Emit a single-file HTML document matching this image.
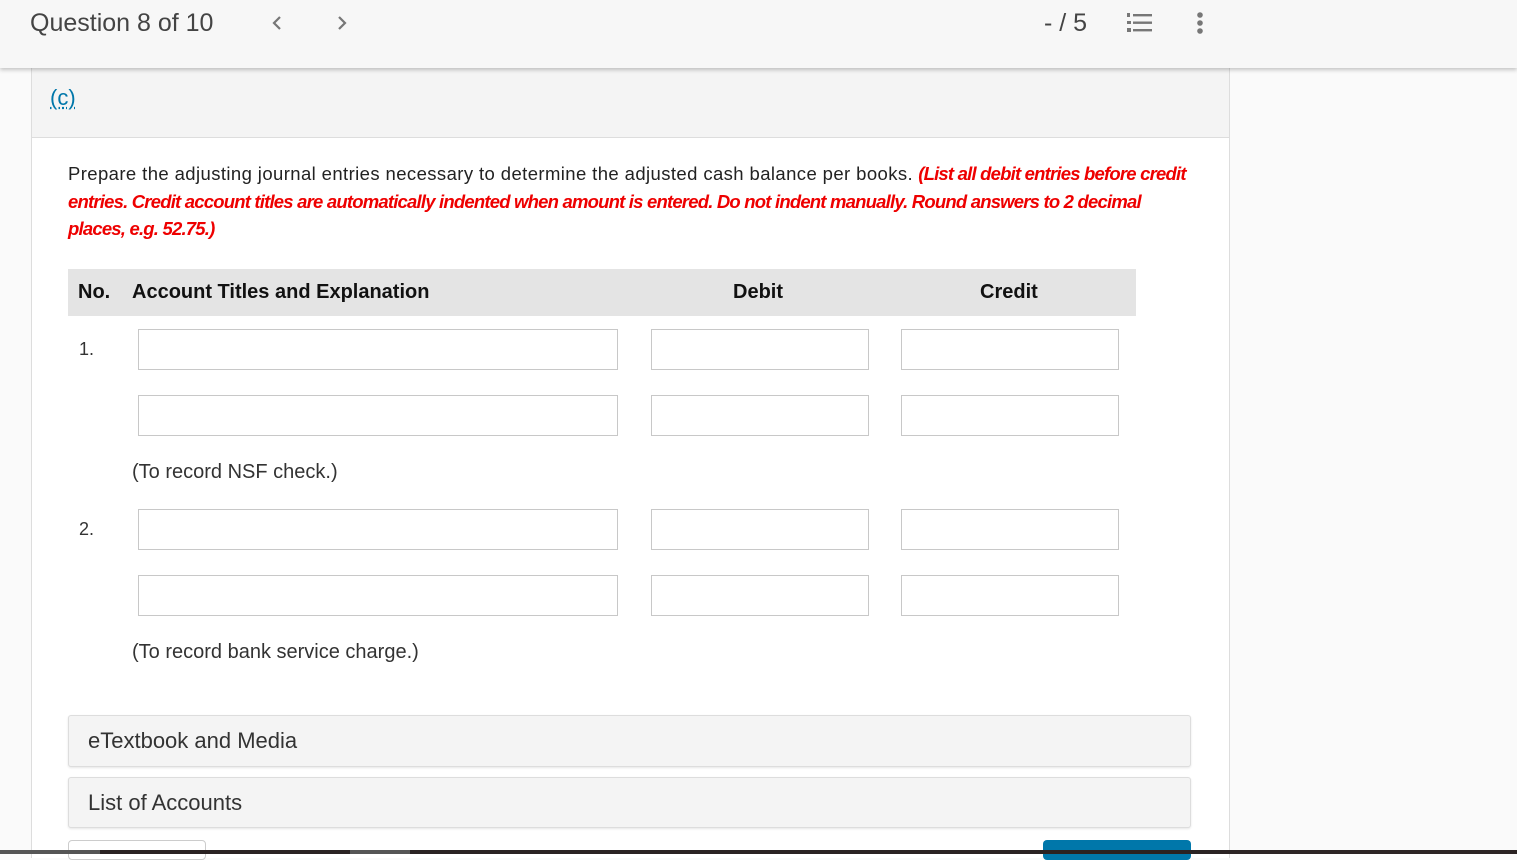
<!DOCTYPE html>
<html><head><meta charset="utf-8"><style>
*{box-sizing:border-box;margin:0;padding:0}
body{width:1517px;height:854px;overflow:hidden;background:#fafafa;font-family:"Liberation Sans",sans-serif;position:relative;color:#222}
.hdr{position:absolute;left:0;top:0;width:1517px;height:68px;background:#f7f7f7;box-shadow:0 2px 4px rgba(0,0,0,.22);z-index:5}
.abs{position:absolute}
.card{position:absolute;left:31px;top:68px;width:1199px;height:790px;background:#fff;border-left:1px solid #ddd;border-right:1px solid #ddd}
.top{position:absolute;left:0;top:0;width:1197px;height:70px;background:#f4f4f4;border-bottom:1px solid #ddd}
.inp{position:absolute;height:41px;border:1px solid #c8c8c8;background:#fff}
.acc{position:absolute;left:68px;width:1123px;background:#f4f4f4;border:1px solid #ddd;border-radius:3px;box-shadow:0 1px 2px rgba(0,0,0,.1);font-size:22px;color:#333;padding-left:19px}
.red{color:#e00;font-weight:bold;font-style:italic;letter-spacing:-0.8px}
</style></head><body>
<div class="hdr">
 <div class="abs" style="left:30px;top:9px;font-size:25px;color:#444">Question 8 of 10</div>
 <svg class="abs" style="left:270px;top:15px" width="14" height="16"><path d="M10 2 L4 8 L10 14" stroke="#777" stroke-width="2.2" fill="none"/></svg>
 <svg class="abs" style="left:335px;top:15px" width="14" height="16"><path d="M4 2 L10 8 L4 14" stroke="#777" stroke-width="2.2" fill="none"/></svg>
 <div class="abs" style="left:1044px;top:9px;font-size:25px;color:#444">- / 5</div>
 <svg class="abs" style="left:1126px;top:12px" width="28" height="22"><g fill="#777"><rect x="7" y="2" width="19" height="2.4"/><rect x="7" y="9.5" width="19" height="2.4"/><rect x="7" y="17" width="19" height="2.4"/><rect x="1" y="1" width="3" height="4"/><rect x="1" y="9" width="4" height="3"/><rect x="1" y="16" width="4" height="4"/></g></svg>
 <svg class="abs" style="left:1194px;top:12px" width="12" height="22"><g fill="#777"><circle cx="6" cy="3" r="2.8"/><circle cx="6" cy="11" r="2.8"/><circle cx="6" cy="19" r="2.8"/></g></svg>
</div>
<div class="card"><div class="top"><div class="abs" style="left:18px;top:17px;font-size:22px;color:#0077aa;text-decoration:underline dotted">(c)</div></div></div>
<div class="abs" style="left:68px;top:160px;white-space:nowrap;font-size:18.5px;line-height:27.5px;color:#222"><span style="letter-spacing:0.4px">Prepare the adjusting journal entries necessary to determine the adjusted cash balance per books.</span> <span class="red">(List all debit entries before credit</span><br><span class="red">entries. Credit account titles are automatically indented when amount is entered. Do not indent manually. Round answers to 2 decimal</span><br><span class="red">places, e.g. 52.75.)</span></div>
<div class="abs" style="left:68px;top:269px;width:1068px;height:47px;background:#e4e4e4;font-size:20px;font-weight:bold;color:#111">
 <span class="abs" style="left:10px;top:12px">No.</span>
 <span class="abs" style="left:64px;top:12px">Account Titles and Explanation</span>
 <span class="abs" style="left:665px;top:12px">Debit</span>
 <span class="abs" style="left:912px;top:12px">Credit</span>
</div>
<div class="abs" style="left:79px;top:339px;font-size:18px;color:#333">1.</div>
<div class="abs" style="left:79px;top:519px;font-size:18px;color:#333">2.</div>
<div class="inp" style="left:138px;top:329px;width:480px"></div><div class="inp" style="left:651px;top:329px;width:218px"></div><div class="inp" style="left:901px;top:329px;width:218px"></div>
<div class="inp" style="left:138px;top:395px;width:480px"></div><div class="inp" style="left:651px;top:395px;width:218px"></div><div class="inp" style="left:901px;top:395px;width:218px"></div>
<div class="inp" style="left:138px;top:509px;width:480px"></div><div class="inp" style="left:651px;top:509px;width:218px"></div><div class="inp" style="left:901px;top:509px;width:218px"></div>
<div class="inp" style="left:138px;top:575px;width:480px"></div><div class="inp" style="left:651px;top:575px;width:218px"></div><div class="inp" style="left:901px;top:575px;width:218px"></div>
<div class="abs" style="left:132px;top:461px;font-size:20px;color:#333">(To record NSF check.)</div>
<div class="abs" style="left:132px;top:641px;font-size:20px;color:#333">(To record bank service charge.)</div>
<div class="acc" style="top:715px;height:52px;line-height:50px">eTextbook and Media</div>
<div class="acc" style="top:777px;height:51px;line-height:49px">List of Accounts</div>
<div class="abs" style="left:68px;top:840px;width:138px;height:20px;border:1px solid #ccc;border-radius:4px;background:#fff"></div>
<div class="abs" style="left:1043px;top:840px;width:148px;height:20px;border-radius:4px;background:#0077aa"></div>
<div class="abs" style="left:0;top:850px;width:1517px;height:4px;background:#2a2222"></div>
<div class="abs" style="left:0;top:850px;width:100px;height:4px;background:#555"></div>
<div class="abs" style="left:350px;top:850px;width:60px;height:4px;background:#555"></div>
</body></html>
